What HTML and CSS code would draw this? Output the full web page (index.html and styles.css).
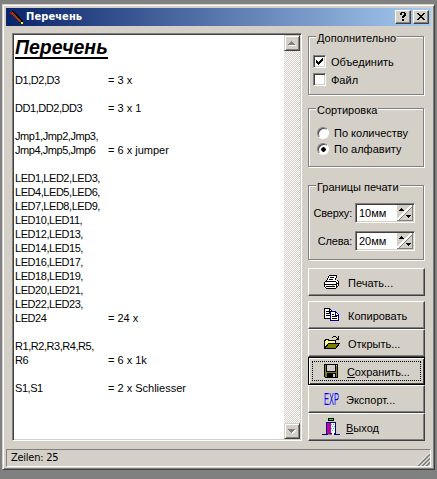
FILE: index.html
```
<!DOCTYPE html>
<html lang="ru">
<head>
<meta charset="utf-8">
<title>Перечень</title>
<link rel="stylesheet" href="styles.css">
</head>
<body>
<div class="window">
  <header class="titlebar">
    <svg class="app-icon" width="16" height="16" viewBox="0 0 16 16" shape-rendering="crispEdges"><path d="M1 3 L4 2 L14 12 L14 14 L12 14 Z" fill="#000"/><path d="M3 4 L12 13" stroke="#a43a08" stroke-width="2"/><path d="M1 3h2v2h-2z" fill="#e00000"/><path d="M12 13h2v2h-2z" fill="#ff0"/></svg>
    <h1 class="title">Перечень</h1>
    <button class="cap"><svg width="16" height="14" shape-rendering="crispEdges"><path d="M5 3h1v-1h4v1h1v3h-1v1h-1v1h-2v-2h1v-1h1v-2h-2v2h-2zM7 9h2v2h-2z"/></svg></button>
    <button class="cap close"><svg width="16" height="14" shape-rendering="crispEdges"><path d="M4 3h2v1h1v1h2v-1h1v-1h2v1h-1v1h-1v1h-1v1h1v1h1v1h1v1h-2v-1h-1v-1h-2v1h-1v1h-2v-1h1v-1h1v-1h1v-1h-1v-1h-1v-1h-1z"/></svg></button>
  </header>
  <main class="client">
    <section class="memo">
      <div class="paper">
        <h2>Перечень</h2>
        <dl class="parts">
          <dt>D1,D2,D3</dt><dd>= 3 x</dd>
          <dt>DD1,DD2,DD3</dt><dd>= 3 x 1</dd>
          <dt>Jmp1,Jmp2,Jmp3,<br>Jmp4,Jmp5,Jmp6</dt><dd>= 6 x jumper</dd>
          <dt>LED1,LED2,LED3,<br>LED4,LED5,LED6,<br>LED7,LED8,LED9,<br>LED10,LED11,<br>LED12,LED13,<br>LED14,LED15,<br>LED16,LED17,<br>LED18,LED19,<br>LED20,LED21,<br>LED22,LED23,<br>LED24</dt><dd>= 24 x</dd>
          <dt>R1,R2,R3,R4,R5,<br>R6</dt><dd>= 6 x 1k</dd>
          <dt>S1,S1</dt><dd>= 2 x Schliesser</dd>
        </dl>
      </div>
      <div class="scroll">
        <button class="arrow"><svg width="12" height="12" shape-rendering="crispEdges"><path d="M3 8h7v1h-7z" fill="#fff"/><path d="M5 4h1v1h1v1h1v1h1v1h-7v-1h1v-1h1v-1h1z" fill="#808080"/></svg></button>
        <button class="arrow"><svg width="12" height="12" shape-rendering="crispEdges"><path d="M3 5h7v1h-1v1h-1v1h-1v1h-1v-1h-1v-1h-1z" fill="#fff"/><path d="M2 4h7v1h-1v1h-1v1h-1v1h-1v-1h-1v-1h-1v-1h-1z" fill="#808080"/></svg></button>
      </div>
    </section>
    <aside class="side">
      <fieldset class="group extra"><legend>Дополнительно</legend>
        <div class="opt"><i class="check"><svg width="9" height="9" shape-rendering="crispEdges"><path d="M1 3h1v1h1v1h1v-1h1v-1h1v-1h1v-1h1v3h-1v1h-1v1h-1v1h-1v1h-1v-1h-1v-1h-1z"/></svg></i><span>Объединить</span></div>
        <div class="opt"><i class="check"></i><span>Файл</span></div>
      </fieldset>
      <fieldset class="group sort"><legend>Сортировка</legend>
        <div class="opt"><i class="radio"></i><span>По количеству</span></div>
        <div class="opt"><i class="radio on"></i><span>По алфавиту</span></div>
      </fieldset>
      <fieldset class="group margins"><legend>Границы печати</legend>
        <div class="field"><span>Сверху:</span><div class="spin"><b>10мм</b><svg width="16" height="16" shape-rendering="crispEdges"><path d="M0 0h16v16h-16z" fill="#d4d0c8"/><path d="M0 15L15 0" stroke="#fff" stroke-width="2"/><path d="M1 16L16 1M15.500 0v16M0 15.500h16" stroke="#808080" fill="none"/><path d="M4 3h1v1h1v1h1v1h-5v-1h1v-1h1zM9 10h5v1h-1v1h-1v1h-1v-1h-1v-1h-1z"/></svg></div></div>
        <div class="field"><span>Слева:</span><div class="spin"><b>20мм</b><svg width="16" height="16" shape-rendering="crispEdges"><path d="M0 0h16v16h-16z" fill="#d4d0c8"/><path d="M0 15L15 0" stroke="#fff" stroke-width="2"/><path d="M1 16L16 1M15.500 0v16M0 15.500h16" stroke="#808080" fill="none"/><path d="M4 3h1v1h1v1h1v1h-5v-1h1v-1h1zM9 10h5v1h-1v1h-1v1h-1v-1h-1v-1h-1z"/></svg></div></div>
      </fieldset>
      <button class="btn print"><svg width="18" height="18" shape-rendering="crispEdges"><path d="M5 2h9v1h-1v2h-1v2h3v1h1v6h-2v1h-1v1h-10v-1h-2v-6h1v-1h1v-1h1v-3h1z" fill="#fff"/><path d="M6 2h8v1h-8zM5 3h1v2h-1zM4 5h1v2h-1zM13 3h1v2h-1zM12 5h1v2h-1zM7 4h4v1h-4zM6 6h4v1h-4zM3 7h1v1h-1zM2 8h10v1h-10zM1 9h1v5h-1zM2 11h11v1h-11zM2 14h1v1h-1zM3 15h10v1h-10zM13 14h1v1h-1zM12 8h1v1h-1zM13 9h1v5h-1zM14 7h1v1h-1zM15 8h1v5h-1zM14 13h1v1h-1zM14 10h1v1h-1zM3 13h9v1h-9z"/><path d="M9 12h2v1h-2z" fill="#cc0"/></svg><span>Печать...</span></button>
      <button class="btn"><svg width="18" height="18" shape-rendering="crispEdges"><path d="M1.500 2.500h5l3 3v7h-8z" fill="#fff" stroke="#000"/><path d="M3 5.500h3M3 7.500h4M3 9.500h4M6.500 3v3h3" stroke="#000" fill="none"/><path d="M7.500 5.500h5l3 3v6h-8z" fill="#fff" stroke="#000080"/><path d="M12.500 6v3h3" stroke="#000080" fill="none"/><path d="M9 8.500h2M9 10.500h5M9 12.500h5" stroke="#000"/></svg><span>Копировать</span></button>
      <button class="btn"><svg width="18" height="18" shape-rendering="crispEdges"><path d="M1.500 14.500v-8h1v-1h3v1h7v3h-6z" fill="#ffff80" stroke="#000"/><path d="M1.500 14.500l4-5h11l-4 5z" fill="#808000" stroke="#000"/><path d="M9 3h1v-1h3v1h1v1h1v-2h1v4h-3v-1h1v-1h-1v-1h-3v1h-1z"/></svg><span>Открыть...</span></button>
      <button class="btn default save"><svg width="18" height="18" shape-rendering="crispEdges"><path d="M2 2h14v14h-13l-1-1z" fill="#000"/><path d="M3 3h12v12h-12z" fill="#808000"/><path d="M4 3h10v7h-10zM5 11h9v4h-9z"/><path d="M5 2h8v7h-8zM11 12h2v3h-2zM14 3h1v1h-1z" fill="#d4d0c8"/><path d="M5 2h8v1h-8z"/></svg><span><u>С</u>охранить...</span></button>
      <button class="btn export"><strong>EXP</strong><span>Экспорт...</span></button>
      <button class="btn exit"><svg width="18" height="18" shape-rendering="crispEdges"><path d="M6 0h6v3h-6z"/><path d="M7 1h4v1h-4z" fill="#0f0"/><path d="M4 4h10v12h4v1h-18v-1h4z" fill="#000080"/><path d="M5 5h4v10h-1v1h-3z" fill="#c000a0"/><path d="M6 16h5v1h-5z" fill="#808080"/><path d="M9 5h4v10h-1v2h-2v-2h-1z" fill="#fff"/><path d="M9 6h1v1h-1zM11 6h1v1h-1zM10 8h1v1h-1zM12 8h1v1h-1zM9 10h1v1h-1zM11 10h1v1h-1zM10 12h1v1h-1z" fill="#0cc"/></svg><span><u>В</u>ыход</span></button>
    </aside>
  </main>
  <footer class="status"><span>Zeilen: 25</span><svg width="13" height="13"><path d="M1 13L13 1M5 13L13 5M9 13L13 9" stroke="#808080" stroke-width="2"/><path d="M0 12.500L12.500 0M4 12.500L13 3.500M8 12.500L13 7.500" stroke="#fff"/></svg></footer>
</div>
</body>
</html>
```
FILE: styles.css
```
* { box-sizing: border-box; }
body { margin: 0; height: 479px; padding: 4px 2px; background: #808080; font: 11px/14px "Liberation Sans", sans-serif; color: #000; overflow: hidden; }
.window { width: 433px; height: 466px; padding: 3px; background: #d4d0c8; border: 1px solid; border-color: #d4d0c8 #404040 #404040 #d4d0c8; box-shadow: inset 1px 1px #fff, inset -1px -1px #808080; }
button { font: inherit; color: inherit; padding: 0; margin: 0; border-radius: 0; background: #d4d0c8; border: 1px solid; border-color: #fff #404040 #404040 #fff; box-shadow: inset -1px -1px #808080; }
svg { display: block; flex: none; }
.titlebar { height: 18px; display: flex; align-items: center; padding: 0 2px; background: linear-gradient(90deg, #0a246a, #a6caf0); }
.title { flex: 1; margin: 0 0 0 1px; font: bold 11px/18px "DejaVu Sans Condensed", sans-serif; letter-spacing: .1px; color: #fff; }
.app-icon { margin-left: 1px; }
.cap { width: 16px; height: 14px; }
.cap svg { margin: -1px; }
.close { margin-left: 2px; }
.client { display: flex; padding: 7px 6px 0 6px; height: 422px; }
.memo { width: 290px; height: 408px; display: flex; background: #fff; border: 1px solid; border-color: #808080 #fff #fff #808080; box-shadow: inset 1px 1px #404040, inset -1px -1px #d4d0c8; padding: 1px; }
.paper { flex: 1; padding: 0 0 0 1px; }
.paper h2 { margin: 3px 0 0; font: italic bold 19.500px/19px "Liberation Sans", sans-serif; border-bottom: 2px solid #000; width: 93px; height: 21px; white-space: nowrap; }
.parts { margin: 14px 0 0; display: grid; grid-template-columns: 93px 1fr; row-gap: 14px; align-items: end; }
.parts dt, .parts dd { margin: 0; white-space: nowrap; }
.parts dt { letter-spacing: -.45px; }
.scroll { width: 16px; display: flex; flex-direction: column; justify-content: space-between; background: repeating-conic-gradient(#fff 0 25%, #d4d0c8 0 50%) 0 0 / 2px 2px; }
.arrow { width: 16px; height: 16px; border-color: #d4d0c8 #404040 #404040 #d4d0c8; box-shadow: inset 1px 1px #fff, inset -1px -1px #808080; padding: 1px; }
.side { width: 117px; margin-left: 6px; padding-top: 3px; display: flex; flex-direction: column; }
.group { position: relative; margin: 0; width: 116px; min-width: 0; border: 1px solid #808080; box-shadow: 1px 1px #fff, inset 1px 1px #fff; padding: 0; flex: none; }
.group legend { position: absolute; left: 7px; top: -6px; padding: 0 1px; background: #d4d0c8; line-height: 14px; }
.side span, .group legend { white-space: nowrap; }
.extra { height: 59px; padding: 15px 0 0 4px; }
.sort { height: 59px; margin-top: 13px; padding: 16px 0 0 8px; }
.margins { height: 75px; margin-top: 18px; padding: 17px 8px 0 5px; }
.opt { display: flex; align-items: center; height: 18px; }
.extra .opt { padding-top: 1px; }
.sort .opt { height: 16px; }
.check { width: 13px; height: 13px; padding: 1px; background: #fff; border: 1px solid; border-color: #808080 #fff #fff #808080; box-shadow: inset 1px 1px #404040, inset -1px -1px #d4d0c8; margin-right: 5px; }
.radio { width: 12px; height: 12px; border-radius: 50%; background: #fff; border: 1px solid; border-color: #808080 #fff #fff #808080; box-shadow: inset 1px 1px #404040; margin-right: 5px; }
.on { background: radial-gradient(circle at 5.500px 5.500px, #000 2px, #fff 2.500px); }
.field { display: flex; justify-content: flex-end; align-items: center; height: 20px; margin-bottom: 8px; gap: 3px; }
.field span { letter-spacing: -.2px; }
.spin { flex: none; width: 60px; height: 20px; padding: 1px; background: #fff; border: 1px solid; border-color: #808080 #fff #fff #808080; box-shadow: inset 1px 1px #404040, inset -1px -1px #d4d0c8; display: flex; justify-content: space-between; }
.spin b { font-weight: 400; line-height: 16px; padding-left: 2px; }
.btn { display: flex; align-items: center; width: 117px; height: 28px; flex: none; padding-left: 14px; text-align: left; }
.btn span { margin-left: 7px; padding-top: 2px; }
.print { margin: 8px 0 5px; }
.default { border-color: #000; box-shadow: inset 1px 1px #fff, inset -1px -1px #404040; outline: 1px dotted #000; outline-offset: -5px; }
.save { padding-left: 13px; letter-spacing: -.1px; }
.export strong { width: 16px; font: 16.500px/18px "Liberation Sans", sans-serif; color: #00f; transform: translate(1px, 0) scaleX(.45); transform-origin: 0 50%; }
.exit { padding-left: 13px; }
.exit span { margin-left: 6px; }
.status { height: 18px; margin-top: 1px; border: 1px solid; border-color: #808080 #fff #fff #808080; padding-left: 4px; display: flex; justify-content: space-between; align-items: flex-end; font: 11px/16px "DejaVu Sans Condensed", sans-serif; letter-spacing: -.25px; }
```
